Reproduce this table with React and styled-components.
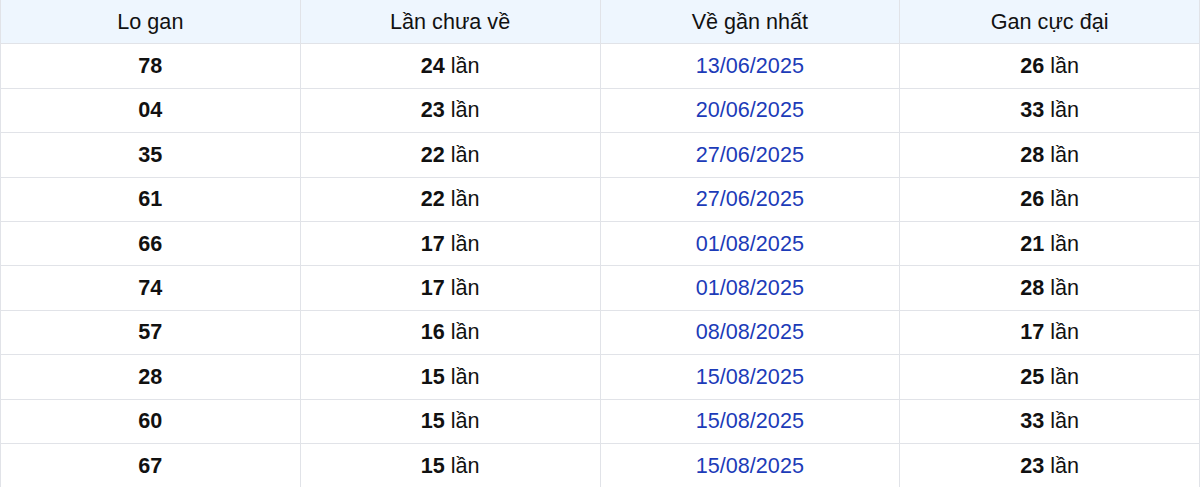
import React from 'react';
import styled, { createGlobalStyle } from 'styled-components';

const GlobalStyle = createGlobalStyle`
  body {
    margin: 0;
    background: #fff;
    font-family: "Liberation Sans", Arial, sans-serif;
  }
`;

const Table = styled.table`
  width: 1200px;
  border-collapse: collapse;
  table-layout: fixed;
  font-size: 21.6px;
  color: #111;
`;

const Th = styled.th`
  height: 43.4px;
  padding: 0;
  font-weight: 400;
  background: #eef6fe;
  border: 1px solid #e1e3e8;
  border-top: none;
  text-align: center;
`;

const Td = styled.td`
  height: 43.4px;
  padding: 0;
  border: 1px solid #e1e3e8;
  text-align: center;
  color: ${p => (p.$date ? '#1c3bb8' : '#111')};
  font-weight: ${p => (p.$bold ? 700 : 400)};
`;

const Num = styled.b`
  font-weight: 700;
`;

const rows = [
  ['78', 24, '13/06/2025', 26],
  ['04', 23, '20/06/2025', 33],
  ['35', 22, '27/06/2025', 28],
  ['61', 22, '27/06/2025', 26],
  ['66', 17, '01/08/2025', 21],
  ['74', 17, '01/08/2025', 28],
  ['57', 16, '08/08/2025', 17],
  ['28', 15, '15/08/2025', 25],
  ['60', 15, '15/08/2025', 33],
  ['67', 15, '15/08/2025', 23],
];

export default function App() {
  return (
    <>
      <GlobalStyle />
      <Table>
        <thead>
          <tr>
            <Th>Lo gan</Th>
            <Th>Lần chưa về</Th>
            <Th>Về gần nhất</Th>
            <Th>Gan cực đại</Th>
          </tr>
        </thead>
        <tbody>
          {rows.map(r => (
            <tr key={r[0]}>
              <Td $bold>{r[0]}</Td>
              <Td><Num>{r[1]}</Num> lần</Td>
              <Td $date>{r[2]}</Td>
              <Td><Num>{r[3]}</Num> lần</Td>
            </tr>
          ))}
        </tbody>
      </Table>
    </>
  );
}
